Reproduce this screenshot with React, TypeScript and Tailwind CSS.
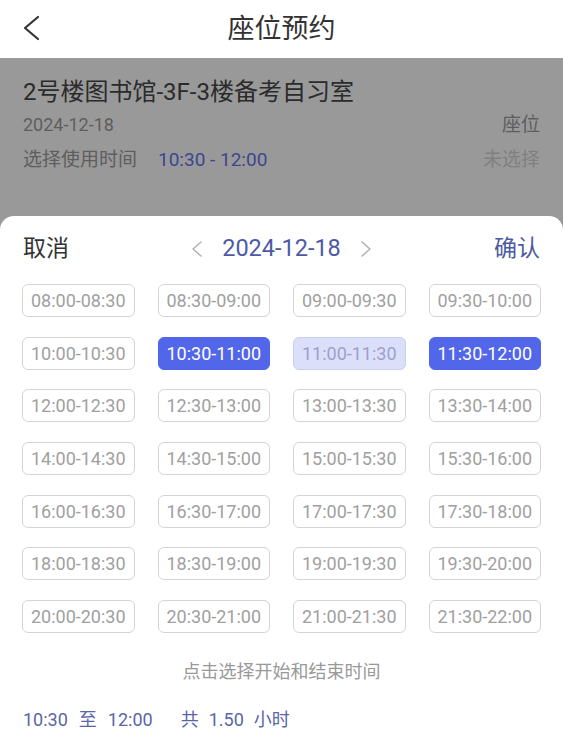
import { useState } from "react";

const FONT = "[font-family:Roboto,'Noto_Sans_CJK_SC',sans-serif]";

const SLOTS = [
  "08:00-08:30", "08:30-09:00", "09:00-09:30", "09:30-10:00",
  "10:00-10:30", "10:30-11:00", "11:00-11:30", "11:30-12:00",
  "12:00-12:30", "12:30-13:00", "13:00-13:30", "13:30-14:00",
  "14:00-14:30", "14:30-15:00", "15:00-15:30", "15:30-16:00",
  "16:00-16:30", "16:30-17:00", "17:00-17:30", "17:30-18:00",
  "18:00-18:30", "18:30-19:00", "19:00-19:30", "19:30-20:00",
  "20:00-20:30", "20:30-21:00", "21:00-21:30", "21:30-22:00",
];

function Chevron({ dir, className }: { dir: "left" | "right"; className?: string }) {
  return (
    <svg viewBox="0 0 20 20" className={className} fill="none" stroke="currentColor" strokeWidth={1.5} strokeLinecap="round" strokeLinejoin="round">
      {dir === "left" ? <path d="M14 3l-8 7 8 7" /> : <path d="M6 3l8 7-8 7" />}
    </svg>
  );
}

export default function App() {
  const [start] = useState(5);
  const [end] = useState(7);

  return (
    <div className={`${FONT} w-[563px] h-[749px] overflow-hidden bg-white flex flex-col`}>
      {/* Top bar */}
      <div className="h-[58px] shrink-0 relative flex items-center justify-center bg-white">
        <svg viewBox="0 0 20 26" className="absolute left-[21px] top-[15px] w-[20px] h-[26px]" fill="none" stroke="#333" strokeWidth={2.2} strokeLinecap="round" strokeLinejoin="round">
          <path d="M17 2L4 13l13 11" />
        </svg>
        <span className="text-[27px] leading-[36px] text-[#333]">座位预约</span>
      </div>

      {/* Page behind the sheet (dimmed) */}
      <div className="h-[158px] shrink-0 bg-[#999999] px-[23px] pt-[18px]">
        <div className="text-[24px] leading-[32px] text-[#2b2b2b]">2号楼图书馆-3F-3楼备考自习室</div>
        <div className="mt-[5px] flex justify-between text-[18px] leading-[24px] text-[#5e5e5e]">
          <span>2024-12-18</span>
          <span className="text-[19px]">座位</span>
        </div>
        <div className="mt-[11px] flex justify-between text-[19px] leading-[24px]">
          <span className="text-[#5e5e5e]">
            选择使用时间<span className="ml-[21px] text-[#3d4690]">10:30 - 12:00</span>
          </span>
          <span className="text-[#808080]">未选择</span>
        </div>
      </div>

      {/* Bottom sheet */}
      <div className="flex-1 bg-[#999999]">
        <div className="h-full bg-white rounded-t-[14px] pt-[16px]">
          <div className="h-[34px] px-[23px] flex items-center justify-between">
            <span className="text-[23px] text-[#333]">取消</span>
            <div className="flex items-center text-[#4c5aa6]">
              <Chevron dir="left" className="w-[20px] h-[20px] text-[#b0b0b0]" />
              <span className="mx-[15px] text-[23.5px]">2024-12-18</span>
              <Chevron dir="right" className="w-[20px] h-[20px] text-[#b0b0b0]" />
            </div>
            <span className="text-[23px] text-[#4c5aa6]">确认</span>
          </div>

          <div className="mt-[18px] px-[22px] grid grid-cols-4 gap-x-[23px] gap-y-[19.7px]">
            {SLOTS.map((s, i) => {
              const isEdge = i === start || i === end;
              const isMid = i > start && i < end;
              return (
                <div
                  key={s}
                  className={`h-[33px] rounded-[6px] border flex items-center justify-center text-[18px] ${
                    isEdge
                      ? "bg-[#5266ea] border-[#5266ea] text-white"
                      : isMid
                      ? "bg-[#dcdffa] border-[#c9cdf2] text-[#9ca1cc]"
                      : "bg-white border-[#d4d4d4] text-[#a0a0a0]"
                  }`}
                >
                  {s}
                </div>
              );
            })}
          </div>

          <div className="mt-[27px] text-center text-[18px] leading-[24px] text-[#999]">点击选择开始和结束时间</div>

          <div className="mt-[24px] px-[23px] text-[18px] leading-[24px] text-[#5a66a4]">
            <span>10:30</span>
            <span className="mx-[11px]">至</span>
            <span>12:00</span>
            <span className="ml-[28px]">共</span>
            <span className="mx-[10px]">1.50</span>
            <span>小时</span>
          </div>
        </div>
      </div>
    </div>
  );
}
